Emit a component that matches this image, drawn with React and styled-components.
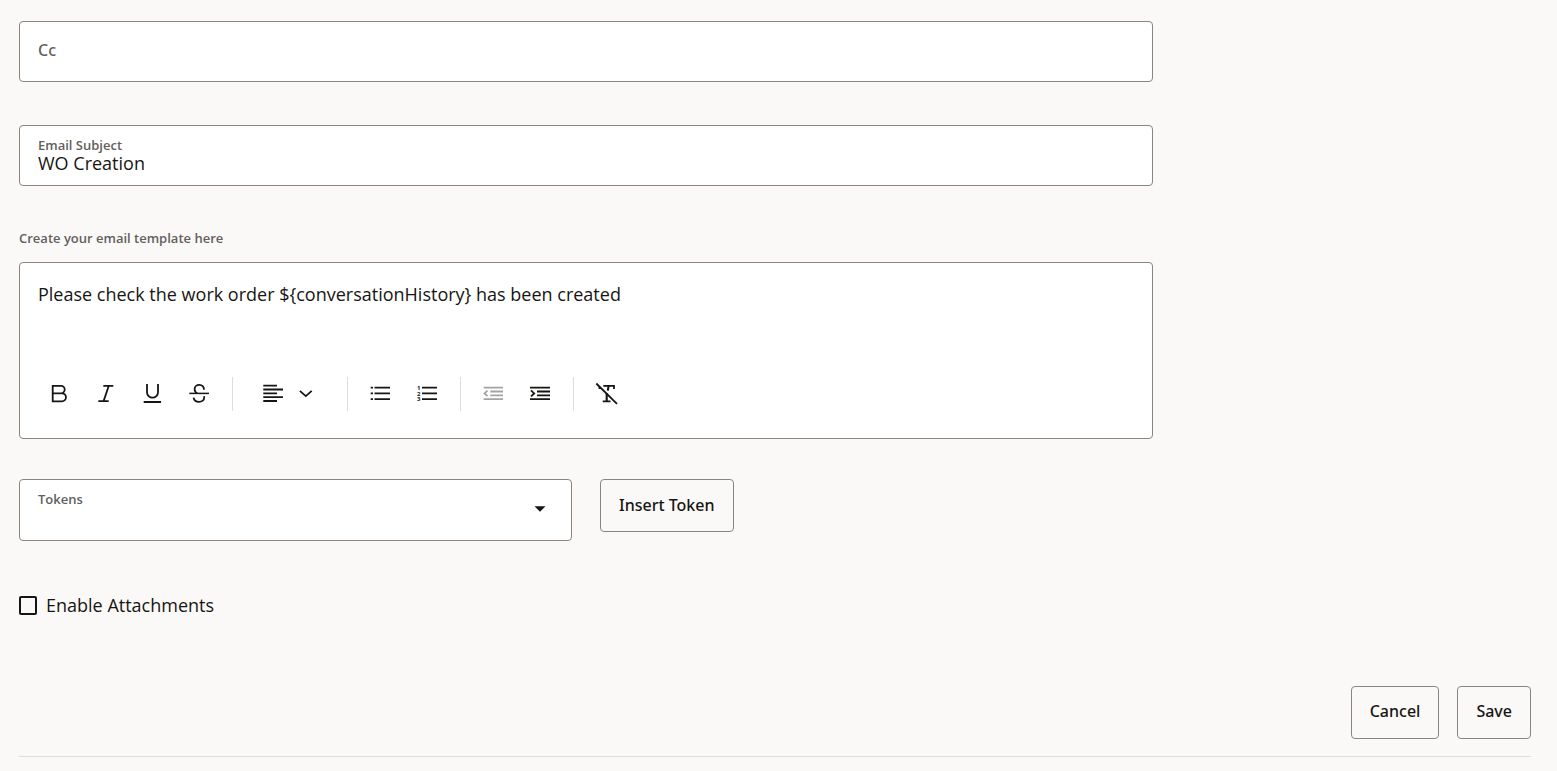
import React, {useState} from 'react';
import styled, {createGlobalStyle} from 'styled-components';

const App = () => {

    const [cc, setCc] = useState('');
    const [subject, setSubject] = useState('WO Creation');
    const [body, setBody] = useState('Please check the work order ${conversationHistory} has been created');
    const [token, setToken] = useState('');
    const [attachments, setAttachments] = useState(false);

    return (
      <Page>
          <GlobalStyle/>
          <Form>
              <Field>
                  <CcInput
                      aria-label="Cc"
                      placeholder="Cc"
                      value={cc}
                      onChange={(e) => setCc(e.target.value)}
                  />
              </Field>
              <Field>
                  <FieldLabel htmlFor="subject">Email Subject</FieldLabel>
                  <FieldInput
                      id="subject"
                      value={subject}
                      onChange={(e) => setSubject(e.target.value)}
                  />
              </Field>
              <EditorLabel htmlFor="template">Create your email template here</EditorLabel>
              <Editor>
                  <EditorText
                      id="template"
                      spellCheck={false}
                      value={body}
                      onChange={(e) => setBody(e.target.value)}
                  />
                  <Toolbar/>
              </Editor>
              <TokenRow>
                  <TokenField>
                      <FieldLabel htmlFor="tokens">Tokens</FieldLabel>
                      <TokenSelect id="tokens" value={token} onChange={(e) => setToken(e.target.value)}>
                          <option value=""></option>
                          <option value="conversationHistory">conversationHistory</option>
                      </TokenSelect>
                      <Caret width="12" height="6" viewBox="0 0 12 6" aria-hidden="true">
                          <path d="M0.5 0.3h11L6 5.8z" fill="#161513"/>
                      </Caret>
                  </TokenField>
                  <Button
                      type="button"
                      onClick={() => token && setBody(body + ' ${' + token + '}')}
                  >Insert Token
                  </Button>
              </TokenRow>
              <CheckLabel>
                  <Checkbox
                      type="checkbox"
                      checked={attachments}
                      onChange={(e) => setAttachments(e.target.checked)}
                  />
                  Enable Attachments
              </CheckLabel>
          </Form>
          <Footer>
              <Button type="button">Cancel</Button>
              <Button type="button">Save</Button>
          </Footer>
      </Page>
    );
};

const Toolbar = () => (
    <Tools role="toolbar" aria-label="Formatting">
        <Tool type="button" aria-label="Bold">
            <Icon><path d="M7.7 13.3V5.9H16a3.7 3.7 0 0 1 0 7.4H7.7v8.1h9.2a4 4 0 0 0 0-8.1"/></Icon>
        </Tool>
        <Tool type="button" aria-label="Italic">
            <Icon><path d="M11.3 5.8h10M6.3 21.1h10.4M16.8 5.8l-5.2 15.3"/></Icon>
        </Tool>
        <Tool type="button" aria-label="Underline">
            <Icon><path d="M8 4v8.2a5.5 5.5 0 0 0 11 0V4M4.7 22h17.4"/></Icon>
        </Tool>
        <Tool type="button" aria-label="Strikethrough">
            <Icon>
                <path d="M18 9.7c0-2.9-1.9-4.8-4.7-4.8-2.8 0-4.7 1.8-4.7 4.3 0 1.8 1 3.2 2.6 4.1"/>
                <path d="M7.6 17.6c.4 2.6 2.6 4.2 5.4 4.2 3 0 5.2-1.9 5.2-4.3 0-.5-.1-.9-.2-1.3"/>
                <path d="M3.3 13.4H23" strokeWidth="1.5"/>
            </Icon>
        </Tool>
        <Separator/>
        <AlignTool type="button" aria-label="Alignment">
            <Icon><path d="M3.3 5.7H17M3.3 9.5H23M3.3 13.4H17M3.3 17.2H23M3.3 21H17" strokeWidth="1.8"/></Icon>
            <Icon><path d="M7.9 10.9l5.9 5.2 5.9-5.2"/></Icon>
        </AlignTool>
        <Separator/>
        <Tool type="button" aria-label="Bulleted list">
            <Icon><path d="M3.7 7.7H6M3.7 13.4H6M3.7 19.1H6M7.5 7.7H23M7.5 13.4H23M7.5 19.1H23"/></Icon>
        </Tool>
        <Tool type="button" aria-label="Numbered list">
            <Icon>
                <path d="M8 7.7h15M8 13.4h15M8 19.1h15"/>
                <Digit x="3" y="10">1</Digit>
                <Digit x="3" y="16">2</Digit>
                <Digit x="3" y="21">3</Digit>
            </Icon>
        </Tool>
        <Separator/>
        <Tool type="button" aria-label="Decrease indent" disabled>
            <Icon><path d="M3.7 7.7H23M10.3 11.5H23M10.3 15.3H23M3.7 19.1H23M7.5 10.7l-3 2.7 3 2.7"/></Icon>
        </Tool>
        <Tool type="button" aria-label="Increase indent">
            <Icon><path d="M3 7.7H23M10 11.5H23M10 15.3H23M3 19.1H23M4 10.4l3.2 3L4 16.4"/></Icon>
        </Tool>
        <Separator/>
        <Tool type="button" aria-label="Clear formatting">
            <Icon>
                <path d="M3.3 3.5L24 23.8"/>
                <path d="M10.3 5.8H21V9M6.5 6.5V9M9.7 21.3h7.8"/>
                <path d="M13.7 13v8.3M15.6 5.8l-.8 4.8" strokeWidth="2.1"/>
            </Icon>
        </Tool>
    </Tools>
);

const GlobalStyle = createGlobalStyle`
  *{
    box-sizing: border-box;
  }
  body{
    margin: 0;
    background: #fbf9f8;
    color: #161513;
    font-family: "Open Sans", "Noto Sans", sans-serif;
  }
  button, input, textarea, select{
    font-family: inherit;
    color: inherit;
  }
`;

const Page = styled.main`
  padding: 21px 26px 14px 19px;
`;

const Form = styled.form`
  width: 75%;
`;

const Field = styled.div`
  display: flex;
  flex-direction: column;
  height: 61px;
  margin-bottom: 43px;
  padding: 10px 18px 0 18px;
  background: white;
  border: 1px solid #8b8580;
  border-radius: 4px;
`;

const FieldLabel = styled.label`
  font-size: 13px;
  line-height: 18px;
  font-weight: 600;
  color: #625f5c;
`;

const FieldInput = styled.input`
  width: 100%;
  height: 18px;
  padding: 0;
  border: none;
  outline: none;
  background: none;
  font-size: 18px;
  line-height: 18px;
`;

const CcInput = styled(FieldInput)`
  height: 36px;
  font-family: "Noto Sans", sans-serif;
  font-size: 16px;
  font-weight: 500;
  &::placeholder{
    color: #625f5c;
    opacity: 1;
  }
`;

const EditorLabel = styled(FieldLabel)`
  display: block;
  margin-bottom: 15px;
`;

const Editor = styled.div`
  margin-bottom: 40px;
  padding: 17px 15px 21px 15px;
  background: white;
  border: 1px solid #8b8580;
  border-radius: 4px;
`;

const EditorText = styled.textarea`
  display: block;
  width: 100%;
  height: 90px;
  padding: 0 3px;
  border: none;
  outline: none;
  resize: none;
  background: none;
  font-size: 18px;
  line-height: 28px;
`;

const Tools = styled.div`
  display: flex;
  align-items: center;
  height: 47px;
`;

const Tool = styled.button`
  display: flex;
  align-items: center;
  justify-content: center;
  width: 47px;
  height: 47px;
  padding: 0;
  border: none;
  background: none;
  color: ${(props) => (props.disabled ? '#a5a3a1' : '#161513')};
`;

const AlignTool = styled(Tool)`
  justify-content: flex-start;
  gap: 5px;
  width: 96px;
  padding: 0 18px;
`;

const Separator = styled.div`
  width: 1px;
  height: 34px;
  margin: 0 9px;
  background: #dfdcda;
`;

const Icon = styled.svg.attrs({
    width: 27,
    height: 27,
    viewBox: '0 0 27 27',
    fill: 'none',
    stroke: 'currentColor',
    strokeWidth: 1.8,
    'aria-hidden': true,
})`
  flex: none;
`;

const Digit = styled.text`
  fill: currentColor;
  stroke: none;
  font-size: 6px;
  font-weight: 700;
`;

const TokenRow = styled.div`
  display: flex;
  align-items: flex-start;
  gap: 28px;
`;

const TokenField = styled(Field)`
  position: relative;
  flex: 0 0 calc(50% - 14px);
  height: 62px;
  margin-bottom: 0;
`;

const TokenSelect = styled.select`
  width: 100%;
  height: 24px;
  padding: 0;
  border: none;
  outline: none;
  background: none;
  appearance: none;
  font-size: 18px;
`;

const Caret = styled.svg`
  position: absolute;
  right: 25px;
  top: 26px;
  pointer-events: none;
`;

const Button = styled.button`
  height: 53px;
  padding: 0 18px 2px 18px;
  border: 1px solid #8b8580;
  border-radius: 4px;
  background: transparent;
  font-family: "Noto Sans", sans-serif;
  font-size: 16px;
  font-weight: 500;
`;

const CheckLabel = styled.label`
  display: inline-flex;
  align-items: center;
  gap: 9px;
  margin-top: 50px;
  font-size: 18px;
  line-height: 28px;
`;

const Checkbox = styled.input`
  appearance: none;
  width: 18px;
  height: 19px;
  margin: 0;
  border: 2px solid #161513;
  border-radius: 2px;
  &:checked{
    background: #161513;
  }
`;

const Footer = styled.footer`
  display: flex;
  justify-content: flex-end;
  gap: 18px;
  margin-top: 66px;
  padding-bottom: 17px;
  border-bottom: 1px solid #dfdcda;
`;

export default App;
